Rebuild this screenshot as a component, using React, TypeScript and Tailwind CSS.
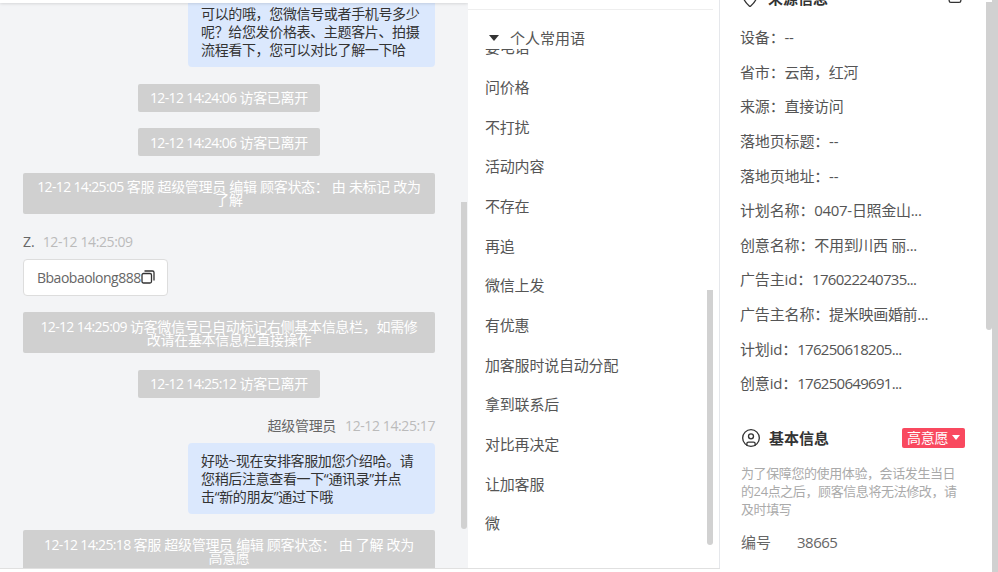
import { CircleUser, MapPin, Trash2 } from 'lucide-react'

const FONT = '[font-family:"Open_Sans","Noto_Sans_CJK_SC",sans-serif]'

const phrases = [
  '要电话', '问价格', '不打扰', '活动内容', '不存在', '再追', '微信上发',
  '有优惠', '加客服时说自动分配', '拿到联系后', '对比再决定', '让加客服', '微',
]

const sourceRows = [
  { label: '设备：', value: '--' },
  { label: '省市：', value: '云南，红河' },
  { label: '来源：', value: '直接访问' },
  { label: '落地页标题：', value: '--' },
  { label: '落地页地址：', value: '--' },
  { label: '计划名称：', value: '0407-日照金山...' },
  { label: '创意名称：', value: '不用到川西 丽...' },
  { label: '广告主id：', value: '176022240735...', tight: true },
  { label: '广告主名称：', value: '提米映画婚前...' },
  { label: '计划id：', value: '176250618205...', tight: true },
  { label: '创意id：', value: '176250649691...', tight: true },
]

function Notice({ time, lines, wide, className }: { time: string; lines: string[]; wide?: boolean; className?: string }) {
  return (
    <div
      className={`mt-[16.67px] shrink-0 self-center rounded-[2px] bg-[#d0d0d0] py-[7.5px] text-center text-[14px] leading-[13px] tracking-[-0.3px] whitespace-nowrap text-white ${
        wide ? 'w-full' : 'w-[182px]'
      } ${className ?? ''}`}
    >
      {lines.map((line, idx) => (
        <div key={line}>
          {idx === 0 && <span className="tracking-[-0.65px]">{time} </span>}
          {line}
        </div>
      ))}
    </div>
  )
}

function Bubble({ lines, className }: { lines: string[]; className?: string }) {
  return (
    <div className={`w-[247px] shrink-0 self-end rounded-[4px] bg-[#dbe8fd] pt-[9px] pb-[8px] pl-[13px] text-[14px] leading-[18px] tracking-[-0.35px] text-[#333] ${className ?? ''}`}>
      {lines.map((line) => (
        <div key={line} className="whitespace-nowrap">{line}</div>
      ))}
    </div>
  )
}

function CopyIcon() {
  return (
    <svg width="14" height="14" viewBox="0 0 14 14" fill="none" stroke="#333" strokeWidth="1.3" className="shrink-0">
      <rect x="1" y="3.5" width="9.5" height="9.5" rx="1.5" />
      <path d="M3.5 1h8a1.5 1.5 0 0 1 1.5 1.5v8" />
    </svg>
  )
}

function Caret({ className }: { className: string }) {
  return (
    <svg viewBox="0 0 10 6" className={className} fill="currentColor">
      <path d="M0 0h10L5 6z" />
    </svg>
  )
}

export default function App() {
  return (
    <div className={`flex h-[572px] w-[998px] overflow-hidden bg-white ${FONT}`}>
      <div className="flex w-[720px] shrink-0 flex-col">
        <div className="flex min-h-0 flex-1">
          {/* Chat */}
          <div className="relative flex w-[468px] shrink-0 flex-col overflow-hidden bg-[#f3f4f6]">
            <div className="relative z-10 h-[3px] shrink-0 bg-white shadow-[0_1px_3px_rgba(0,0,0,0.12)]" />
            <div className="flex min-h-0 flex-1 flex-col overflow-hidden pr-[33px] pl-[23px]">
              <Bubble
                className="-mt-[7px]"
                lines={['可以的哦，您微信号或者手机号多少', '呢？给您发价格表、主题客片、拍摄', '流程看下，您可以对比了解一下哈']}
              />
              <Notice time="12-12 14:24:06" lines={['访客已离开']} />
              <Notice time="12-12 14:24:06" lines={['访客已离开']} />
              <Notice wide time="12-12 14:25:05" lines={['客服 超级管理员 编辑 顾客状态： 由 未标记 改为', '了解']} />

              <div className="mt-[17.67px] mb-[7px] flex h-5 shrink-0 items-center gap-[8px] text-[14px]">
                <span className="text-[#666]">Z.</span>
                <span className="tracking-[-0.4px] text-[#bbb]">12-12 14:25:09</span>
              </div>
              <div className="flex h-[37px] w-[145px] shrink-0 items-center rounded-[4px] border border-[#ddd] bg-white pl-[13px] text-[14px] tracking-[-0.5px] text-[#666]">
                Bbaobaolong888
                <CopyIcon />
              </div>

              <Notice wide time="12-12 14:25:09" lines={['访客微信号已自动标记右侧基本信息栏，如需修', '改请在基本信息栏直接操作']} />
              <Notice time="12-12 14:25:12" lines={['访客已离开']} />

              <div className="mt-[17.67px] mb-[7px] flex h-5 shrink-0 items-center justify-end gap-[9px] text-[14px] tracking-[-0.3px]">
                <span className="text-[#666]">超级管理员</span>
                <span className="tracking-[-0.4px] text-[#bbb]">12-12 14:25:17</span>
              </div>
              <Bubble lines={['好哒~现在安排客服加您介绍哈。请', '您稍后注意查看一下“通讯录”并点', '击“新的朋友”通过下哦']} />
              <Notice wide time="12-12 14:25:18" lines={['客服 超级管理员 编辑 顾客状态： 由 了解 改为', '高意愿']} />
            </div>
            <div className="absolute top-[202px] right-px h-[327px] w-[6px] rounded-b-[3px] bg-[#d1d1d1]" />
          </div>

          {/* Common phrases */}
          <div className="relative flex w-[252px] shrink-0 flex-col overflow-hidden border-r border-r-[#e5e7eb] pr-[1px]">
            <div className="mt-[9px] mr-[5px] flex h-10 shrink-0 items-center border-t border-[#eee] pt-[17px] pl-[21px] text-[15px] text-[#555]">
              <Caret className="h-[6px] w-[10px] text-[#333]" />
              <span className="ml-[11px]">个人常用语</span>
            </div>
            <div className="min-h-0 flex-1 overflow-hidden pl-[17px]">
              <div className="-mt-[21.4px]">
                {phrases.map((phrase) => (
                  <div key={phrase} className="flex h-[39.7px] items-center text-[15px] tracking-[-0.2px] text-[#555]">
                    {phrase}
                  </div>
                ))}
              </div>
            </div>
            <div className="absolute top-[290px] right-[6px] h-[255px] w-[6px] rounded-b-[3px] bg-[#d1d1d1]" />
          </div>
        </div>
        <div className="h-[4px] shrink-0 border-t border-[#e0e0e0] bg-white" />
      </div>

      {/* Customer info */}
      <div className="relative min-w-0 flex-1 overflow-hidden pr-[33px] pl-[21px]">
        <div className="-mt-[12px] flex h-5 items-center justify-between">
          <div className="flex items-center gap-[8px] text-[15px] font-bold text-[#333]">
            <MapPin size={20} strokeWidth={1.6} className="-ml-[1px]" />
            来源信息
          </div>
          <Trash2 size={20} strokeWidth={1.6} className="-mt-[8px] text-[#333]" />
        </div>
        <div className="mt-[12.2px]">
          {sourceRows.map((row) => (
            <div key={row.label} className="-ml-[1px] flex h-[34.6px] items-center text-[15px] tracking-[-0.15px] whitespace-nowrap text-[#555]">
              {row.label}
              <span className={row.tight ? 'tracking-[-0.7px]' : 'tracking-[-0.3px]'}>{row.value}</span>
            </div>
          ))}
        </div>

        <div className="mt-[27.2px] flex h-5 items-center justify-between">
          <div className="flex items-center gap-[8px] text-[15px] font-bold text-[#333]">
            <CircleUser size={20} strokeWidth={1.6} />
            基本信息
          </div>
          <div className="flex h-5 w-[63px] items-center gap-[4px] rounded-[2px] bg-[#f9495f] pl-[5px] text-[14px] tracking-[-0.3px] text-white">
            高意愿
            <Caret className="h-[5px] w-[8px] text-white" />
          </div>
        </div>
        <p className="mt-4 text-[13px] leading-[18px] tracking-[-0.4px] text-[#aaa]">
          为了保障您的使用体验，会话发生当日的24点之后，顾客信息将无法修改，请及时填写
        </p>
        <div className="mt-[14px] flex h-5 items-center text-[15px] text-[#666]">
          <span className="w-[56px]">编号</span>
          <span className="tracking-[-0.5px]">38665</span>
        </div>

        <div className="absolute top-[2px] right-[6px] h-[328px] w-[6px] rounded-b-[3px] bg-[#d1d1d1]" />
        <div className="absolute inset-y-0 right-0 w-[6px] bg-[#d1d1d1]" />
      </div>
    </div>
  )
}
